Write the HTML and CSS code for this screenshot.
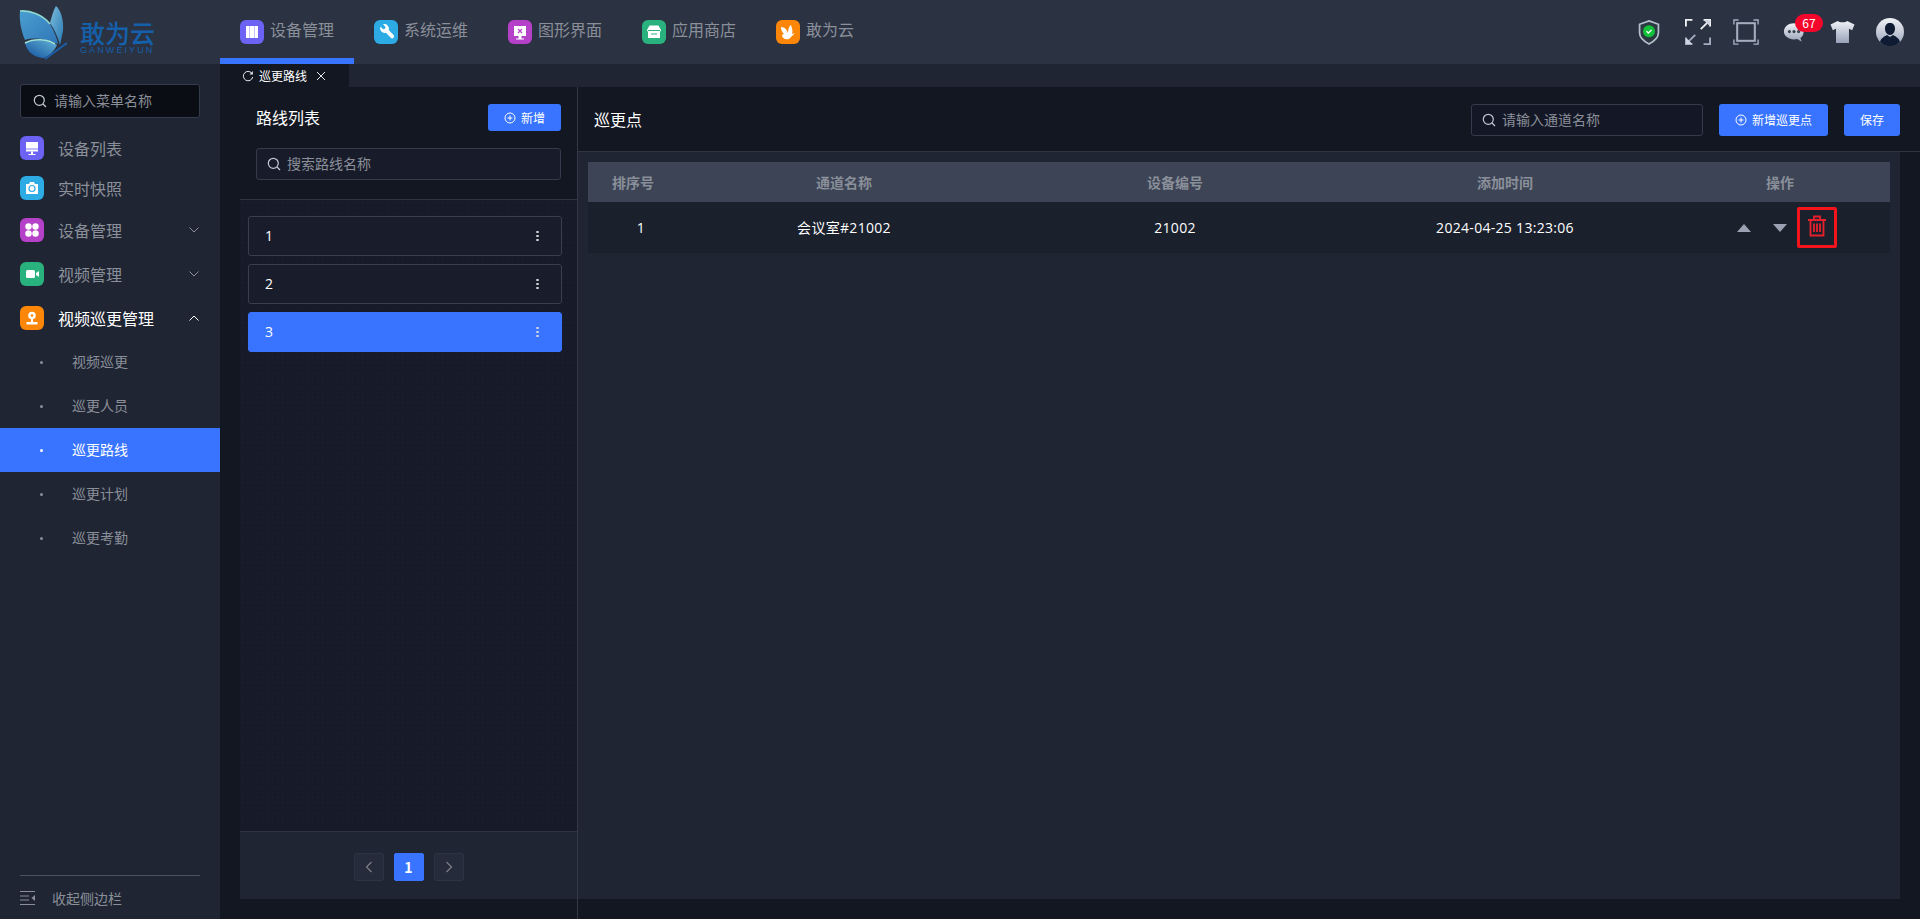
FILE: index.html
```html
<!DOCTYPE html>
<html lang="zh-CN">
<head>
<meta charset="utf-8">
<title>敢为云 - 巡更路线</title>
<link rel="stylesheet" href="styles.css">
</head>
<body>
<svg class="defs" width="0" height="0" aria-hidden="true">
  <defs>
    <linearGradient id="wa" x1="0" y1="0" x2="1" y2="1"><stop offset="0" stop-color="#4a9ed0"/><stop offset="1" stop-color="#3076b8"/></linearGradient>
    <linearGradient id="wb" x1="0" y1="0" x2="1" y2="1"><stop offset="0" stop-color="#79bcdc"/><stop offset="1" stop-color="#2c7ab4"/></linearGradient>
    <linearGradient id="wc" x1="1" y1="0" x2="0" y2="1"><stop offset="0" stop-color="#62b4d6"/><stop offset="1" stop-color="#14519f"/></linearGradient>
    <linearGradient id="sil" x1="0" y1="0" x2="0" y2="1"><stop offset="0" stop-color="#f0f2f6"/><stop offset="1" stop-color="#98a2b8"/></linearGradient>
  </defs>
</svg>
<header class="topbar">
  <div class="brand">
    <svg class="brand-mark" viewBox="18 2 50 58" width="50" height="58">
      <path d="M56 5C61 9 64 20 63 30C62 35 61 39 60 44C58 36 54 28 50 22C52 14 54 8 56 5Z" fill="url(#wb)"/>
      <path d="M20 10C30 9 43 14 50 23C54 30 57 37 58 43C47 38 34 36 25 39C21 30 19 18 20 10Z" fill="url(#wa)"/>
      <path d="M20 10C30 9 43 14 50 23" fill="none" stroke="#8fd8cf" stroke-width="1.600"/>
      <path d="M25 42C34 37 48 38 57 44C54 50 50 54 44 57C36 57 27 52 25 42Z" fill="url(#wc)"/>
      <path d="M25 42C34 37 48 38 55 43" fill="none" stroke="#9fe0d4" stroke-width="1.600"/>
      <path d="M45 58L67 42" stroke="#1b5fa8" stroke-width="2"/>
    </svg>
    <div class="brand-text">
      <span class="brand-cn">敢为云</span>
      <span class="brand-en">GANWEIYUN</span>
    </div>
  </div>
  <nav class="topnav">
    <a class="topnav-item is-active">
      <span class="app-icon c-violet"><svg viewBox="0 0 24 24"><path d="M6 6h12v12H6z" fill="#fff"/><path d="M9.500 6v12M14.500 6v12" stroke="#c9c5fb" stroke-width="1"/></svg></span>设备管理
    </a>
    <a class="topnav-item">
      <span class="app-icon c-sky"><svg viewBox="0 0 24 24"><path transform="matrix(-1 0 0 1 24 0)" d="M17.500 6.800l-2.700 2.400-1.800-.5-.5-1.800 2.500-2.600a4.600 4.600 0 0 0-5.700 5.800l-4.800 4.900a1.900 1.900 0 0 0 2.700 2.700l4.900-4.900a4.600 4.600 0 0 0 5.600-6z" fill="#fff"/></svg></span>系统运维
    </a>
    <a class="topnav-item">
      <span class="app-icon c-purple"><svg viewBox="0 0 24 24"><path d="M6 6h12v10H6z" fill="#fff"/><path d="M10.500 16h3v2.500h2.500v1H8v-1h2.500z" fill="#fff"/><path d="M10 9l4 4M14 9l-4 4" stroke="#b441c8" stroke-width="1.200"/></svg></span>图形界面
    </a>
    <a class="topnav-item">
      <span class="app-icon c-green"><svg viewBox="0 0 24 24"><path d="M7.500 5.500h9L19 10a2 2 0 0 1-1 1.800V18H6v-6.200A2 2 0 0 1 5 10z" fill="#fff"/><path d="M6 10.500h12M9 14h6" stroke="#2ab27e" stroke-width="1.200"/></svg></span>应用商店
    </a>
    <a class="topnav-item">
      <span class="app-icon c-orange"><svg viewBox="0 0 24 24"><path d="M5 7c4 0 6 3 7 6 0-3 1-7 3-8 1 3 2 6 1 9l3-1-5 5-1 1c-4 1-7-1-7-4 1-1 2-1 2-1-2-2-3-4-3-7z" fill="#fff"/></svg></span>敢为云
    </a>
  </nav>
  <div class="toolbar">
    <svg class="tool" viewBox="0 0 28 30" width="24" height="26"><path d="M14 2l11 4v10c0 6-5 10-11 13C8 26 3 22 3 16V6z" fill="#2b3a40" stroke="#b6bfce" stroke-width="2"/><circle cx="14" cy="14" r="7" fill="#12c23a"/><path d="M11 14l2.200 2.200L17 12.500" fill="none" stroke="#fff" stroke-width="1.500"/></svg>
    <svg class="tool" viewBox="0 0 28 28" width="26" height="26"><g fill="none" stroke-width="2"><path d="M1 8V1h7" stroke="#eef0f4"/><path d="M20 27h7v-7" stroke="#a5adbf"/><path d="M1 20v7h7" stroke="#a5adbf"/><path d="M20 1h7v7" stroke="#eef0f4"/><path d="M26 2l-9 9" stroke="#eef0f4"/><path d="M2 26l9-9" stroke="#a5adbf"/></g><path d="M27 1v7l-7-7zM1 27v-7l7 7z" fill="#cfd4de"/></svg>
    <svg class="tool" viewBox="0 0 28 28" width="26" height="26"><g fill="none" stroke="#a5adbf" stroke-width="1.500"><path d="M1 6V1h5M22 1h5v5M27 22v5h-5M6 27H1v-5"/></g><rect x="4.500" y="4.500" width="19" height="19" fill="none" stroke="#a5adbf" stroke-width="2.200"/></svg>
    <div class="chat">
      <svg viewBox="0 0 24 24" width="22" height="23"><path d="M12 2C6 2 1 5.800 1 11c0 5 5 8.500 11 8.500 1.500 0 2.500 0 3.500-.3l5 2.800-1.500-4c2.500-1.500 3.500-4 3.500-7C23 5.800 18 2 12 2z" fill="url(#sil)"/><circle cx="7" cy="11" r="1.700" fill="#39404f"/><circle cx="12" cy="11" r="1.700" fill="#39404f"/><circle cx="17" cy="11" r="1.700" fill="#39404f"/></svg>
      <span class="badge">67</span>
    </div>
    <svg class="tool" viewBox="0 0 28 26" width="27" height="24"><path d="M9 1c1 2 9 2 10 0l8 4-2.500 6-3.500-1.500V25H7V9.500L3.500 11 1 5z" fill="url(#sil)"/></svg>
    <svg class="tool avatar" viewBox="0 0 28 28" width="28" height="28"><circle cx="14" cy="14" r="14" fill="url(#sil)"/><path d="M14 5c3 0 5 2 5 5.500S17 17 14 17s-5-3-5-6.500S11 5 14 5zM4 24c1-4 5-6 7-7l3 2 3-2c2 1 6 3 7 7a14 14 0 0 1-20 0z" fill="#0f1b33"/></svg>
  </div>
</header>
<div class="layout">
  <aside class="sidebar">
    <label class="search search-menu">
      <svg class="search-icon" viewBox="0 0 14 14" width="14" height="14"><circle cx="6.300" cy="6.300" r="5" fill="none" stroke="currentColor" stroke-width="1.200"/><path d="M10 10l3 3" stroke="currentColor" stroke-width="1.200"/></svg>
      <span>请输入菜单名称</span>
    </label>
    <ul class="menu">
      <li class="menu-item short"><span class="app-icon c-violet"><svg viewBox="0 0 24 24"><path d="M6 6h12v9.500H6z" fill="#fff"/><path d="M6 13h12" stroke="#6c63f5" stroke-width=".8"/><path d="M11 15.500h2V18h2.500v1h-7v-1H11z" fill="#fff"/></svg></span>设备列表</li>
      <li class="menu-item short"><span class="app-icon c-sky"><svg viewBox="0 0 24 24"><path d="M6 8h3l1-2h4l1 2h3v10H6z" fill="#fff"/><circle cx="12" cy="12.500" r="3" fill="none" stroke="#2cabe5" stroke-width="1.200"/></svg></span>实时快照</li>
      <li class="menu-item"><span class="app-icon c-purple"><svg viewBox="0 0 24 24"><g fill="#fff"><circle cx="8.500" cy="8.500" r="3.200"/><circle cx="15.500" cy="8.500" r="3.200"/><circle cx="8.500" cy="15.500" r="3.200"/><circle cx="15.500" cy="15.500" r="3.200"/></g></svg></span>设备管理<svg class="caret" viewBox="0 0 10 6" width="10" height="6"><path d="M.5.500L5 5l4.500-4.500" fill="none" stroke="currentColor"/></svg></li>
      <li class="menu-item"><span class="app-icon c-green"><svg viewBox="0 0 24 24"><rect x="6" y="8" width="9" height="8" rx="1.500" fill="#fff"/><path d="M16 11l3-2v6l-3-2z" fill="#fff"/></svg></span>视频管理<svg class="caret" viewBox="0 0 10 6" width="10" height="6"><path d="M.5.500L5 5l4.500-4.500" fill="none" stroke="currentColor"/></svg></li>
      <li class="menu-item is-open"><span class="app-icon c-orange"><svg viewBox="0 0 24 24"><circle cx="12" cy="9.500" r="3.800" fill="#fff"/><circle cx="12" cy="9.500" r="1.300" fill="#fb8608"/><path d="M11 13h2v3h-2zM6.500 16h11v2.500h-11z" fill="#fff"/></svg></span>视频巡更管理<svg class="caret" viewBox="0 0 10 6" width="10" height="6"><path d="M.5 5.500L5 1l4.500 4.500" fill="none" stroke="currentColor"/></svg></li>
      <li class="sub-item">视频巡更</li>
      <li class="sub-item">巡更人员</li>
      <li class="sub-item is-active">巡更路线</li>
      <li class="sub-item">巡更计划</li>
      <li class="sub-item">巡更考勤</li>
    </ul>
    <div class="collapse">
      <svg viewBox="0 0 16 16" width="16" height="16"><path d="M0 1.500h15M0 6h9M0 10h9M0 14.500h15" stroke="currentColor" stroke-width="1"/><path d="M15 5v6l-3.500-3z" fill="currentColor"/></svg>
      <span>收起侧边栏</span>
    </div>
  </aside>
  <main class="main">
    <div class="tabbar">
      <div class="tab">
        <svg viewBox="0 0 12 12" width="12" height="12"><path d="M10.300 4A4.700 4.700 0 1 0 10.700 7" fill="none" stroke="#e6e8ec" stroke-width="1"/><path d="M10.800 1v3.400H7.500z" fill="#e6e8ec"/></svg>
        <span>巡更路线</span>
        <svg class="tab-close" viewBox="0 0 10 10" width="10" height="10"><path d="M1 1l8 8M9 1L1 9" stroke="#e6e8ec" stroke-width="1"/></svg>
      </div>
    </div>
    <div class="content">
      <section class="routes">
        <div class="routes-head">
          <div class="routes-title">
            <h2 class="title">路线列表</h2>
            <button class="btn btn-add"><svg viewBox="0 0 12 12" width="12" height="12"><circle cx="6" cy="6" r="5" fill="none" stroke="#fff"/><path d="M6 3.500v5M3.500 6h5" stroke="#fff"/></svg>新增</button>
          </div>
          <label class="search search-route">
            <svg class="search-icon" viewBox="0 0 14 14" width="14" height="14"><circle cx="6.300" cy="6.300" r="5" fill="none" stroke="currentColor" stroke-width="1.200"/><path d="M10 10l3 3" stroke="currentColor" stroke-width="1.200"/></svg>
            <span>搜索路线名称</span>
          </label>
        </div>
        <ul class="route-list">
          <li class="route"><span class="route-name">1</span><span class="more"><i></i><i></i><i></i></span></li>
          <li class="route"><span class="route-name">2</span><span class="more"><i></i><i></i><i></i></span></li>
          <li class="route is-active"><span class="route-name">3</span><span class="more"><i></i><i></i><i></i></span></li>
        </ul>
        <div class="pager">
          <span class="page"><svg viewBox="0 0 8 12" width="8" height="12"><path d="M6.500 1L1.500 6l5 5" fill="none" stroke="currentColor" stroke-width="1.200"/></svg></span>
          <span class="page is-current">1</span>
          <span class="page"><svg viewBox="0 0 8 12" width="8" height="12"><path d="M1.500 1l5 5-5 5" fill="none" stroke="currentColor" stroke-width="1.200"/></svg></span>
        </div>
      </section>
      <section class="points">
        <div class="points-head">
          <h2 class="title">巡更点</h2>
          <div class="points-actions">
            <label class="search search-channel">
              <svg class="search-icon" viewBox="0 0 14 14" width="14" height="14"><circle cx="6.300" cy="6.300" r="5" fill="none" stroke="currentColor" stroke-width="1.200"/><path d="M10 10l3 3" stroke="currentColor" stroke-width="1.200"/></svg>
              <span>请输入通道名称</span>
            </label>
            <button class="btn btn-new"><svg viewBox="0 0 12 12" width="12" height="12"><circle cx="6" cy="6" r="5" fill="none" stroke="#fff"/><path d="M6 3.500v5M3.500 6h5" stroke="#fff"/></svg>新增巡更点</button>
            <button class="btn btn-save">保存</button>
          </div>
        </div>
        <div class="points-body">
          <div class="table">
            <div class="tr th"><span>排序号</span><span>通道名称</span><span>设备编号</span><span>添加时间</span><span>操作</span></div>
            <div class="tr td">
              <span class="cell cell-order">1</span><span class="cell">会议室#21002</span><span class="cell">21002</span><span class="cell">2024-04-25 13:23:06</span>
              <span class="ops">
                <i class="arrow up"></i><i class="arrow down"></i>
                <span class="del"><svg viewBox="0 0 20 22" width="20" height="22"><path d="M1 5h18M7 5V1.500h6V5M3.500 5v15.500h13V5M7 8.500v8.500M10 8.500v8.500M13 8.500v8.500" fill="none" stroke="#e8202c" stroke-width="1.800"/></svg></span>
              </span>
            </div>
          </div>
        </div>
      </section>
    </div>
  </main>
</div>
</body>
</html>
```

FILE: styles.css
```css
* { box-sizing: border-box; }
html, body { height: 100%; }
body {
  margin: 0;
  height: 919px;
  display: flex;
  flex-direction: column;
  overflow: hidden;
  background: #131722;
  color: #fff;
  font-family: "Noto Sans CJK SC", "Liberation Sans", sans-serif;
  font-size: 14px;
}
ul { list-style: none; margin: 0; padding: 0; }
h2 { margin: 0; font-weight: 400; }
.defs { position: absolute; }

.topbar {
  height: 64px;
  flex: none;
  display: flex;
  align-items: center;
  background: #2b3242;
}
.brand {
  width: 220px;
  height: 64px;
  flex: none;
  display: flex;
  align-items: center;
  padding-left: 18px;
  gap: 12px;
}
.brand-text { display: flex; flex-direction: column; align-items: flex-start; padding-top: 9px; }
.brand-cn { font-size: 25px; line-height: 26px; color: #1560ab; font-weight: 500; }
.brand-en { font-size: 9px; line-height: 10px; color: #1560ab; letter-spacing: 2.100px; font-family: "Liberation Sans", sans-serif; }
.topnav { display: flex; height: 64px; }
.topnav-item {
  display: flex;
  align-items: center;
  gap: 6px;
  padding: 0 20px;
  height: 64px;
  font-size: 16px;
  line-height: 1;
  color: #8a8f99;
  border-bottom: 6px solid transparent;
}
.topnav-item .app-icon { margin-top: 6px; }
.topnav-item.is-active { border-bottom-color: #3874ff; }
.app-icon { width: 24px; height: 24px; border-radius: 6px; flex: none; display: block; }
.app-icon svg { display: block; width: 24px; height: 24px; }
.c-violet { background: #6c63f5; }
.c-sky { background: #2cabe5; }
.c-purple { background: #b441c8; }
.c-green { background: #2ab27e; }
.c-orange { background: #fb8608; }

.toolbar { margin-left: auto; display: flex; align-items: center; padding-right: 16px; height: 64px; }
.tool { display: block; flex: none; }
.toolbar > :nth-child(1) { margin-right: 24px; }
.toolbar > :nth-child(2) { margin-right: 22px; }
.toolbar > :nth-child(3) { margin-right: 24px; }
.toolbar > :nth-child(4) { margin-right: 24px; }
.toolbar > :nth-child(5) { margin-right: 20px; }
.chat { position: relative; width: 22px; height: 23px; }
.chat svg { display: block; }
.badge {
  position: absolute;
  left: 12px;
  top: -7px;
  width: 28px;
  height: 18px;
  border-radius: 9px;
  background: #f5072b;
  color: #fff;
  font-size: 12px;
  line-height: 18px;
  text-align: center;
}

.layout { flex: 1; display: flex; min-height: 0; }
.sidebar {
  width: 220px;
  flex: none;
  background: #1f2533;
  display: flex;
  flex-direction: column;
  padding-top: 20px;
}
.search {
  display: flex;
  align-items: center;
  border: 1px solid #333b4d;
  border-radius: 3px;
  color: #8a8f99;
  font-size: 14px;
  line-height: 1;
}
.search span { padding-bottom: 2px; }
.search-icon { flex: none; color: #c3c8d2; }
.search-menu {
  margin: 0 20px 10px;
  width: 180px;
  height: 34px;
  padding-left: 12px;
  gap: 7px;
  background: #0b0d14;
}
.menu { flex: 1; }
.menu-item {
  height: 44px;
  display: flex;
  align-items: center;
  padding: 0 21px 0 20px;
  gap: 14px;
  font-size: 16px;
  color: #8a8f99;
}
.menu-item.short { height: 40px; }
.menu-item.is-open { color: #fff; }
.caret { margin-left: auto; color: #8a8f99; }
.is-open .caret { color: #fff; }
.sub-item {
  height: 44px;
  display: flex;
  align-items: center;
  padding: 0 0 2px 72px;
  position: relative;
  font-size: 14px;
  color: #8a8f99;
}
.sub-item::before {
  content: "";
  position: absolute;
  left: 40px;
  top: 21px;
  width: 3px;
  height: 3px;
  border-radius: 50%;
  background: #8a8f99;
}
.sub-item.is-active { background: #3874ff; color: #fff; }
.sub-item.is-active::before { background: #fff; }
.collapse {
  margin: 0 20px;
  height: 44px;
  border-top: 1px solid #4b5160;
  display: flex;
  align-items: center;
  gap: 16px;
  color: #8a8f99;
  font-size: 14px;
}
.collapse svg { flex: none; display: block; }

.main { flex: 1; min-width: 0; display: flex; flex-direction: column; }
.tabbar { height: 23px; flex: none; background: #1f2533; display: flex; }
.tab {
  width: 129px;
  padding-left: 22px;
  background: #131722;
  display: flex;
  align-items: center;
  font-size: 12px;
  line-height: 1;
  color: #fff;
}
.tab span { margin-left: 5px; }
.tab-close { margin-left: 9px; }
.tab svg { display: block; flex: none; }

.content { flex: 1; min-height: 0; display: flex; padding-left: 20px; }
.title { font-size: 16px; line-height: 24px; color: #fff; }
.routes {
  width: 338px;
  flex: none;
  border-right: 1px solid #333847;
  padding-bottom: 20px;
  display: flex;
  flex-direction: column;
}
.routes-head {
  height: 113px;
  flex: none;
  padding: 17px 16px 0;
  border-bottom: 1px solid #2f3443;
  background: #131722;
}
.routes-title { display: flex; align-items: center; justify-content: space-between; height: 27px; }
.routes-title .title { margin-bottom: 2px; }
.btn {
  display: inline-flex;
  align-items: center;
  justify-content: center;
  gap: 5px;
  border: 0;
  border-radius: 3px;
  background: #3874ff;
  color: #fff;
  font: inherit;
  font-size: 12px;
  line-height: 1;
  padding: 0;
}
.btn svg { flex: none; display: block; }
.btn-add { width: 73px; height: 27px; }
.search-route {
  margin-top: 17px;
  height: 32px;
  padding-left: 10px;
  gap: 6px;
  background: #181c2a;
}
.route-list {
  flex: 1;
  padding: 16px 15px 0 8px;
  display: flex;
  flex-direction: column;
  gap: 8px;
  background: #171b29 radial-gradient(rgba(255, 255, 255, .012) 1px, transparent 1px) 0 0 / 5px 5px;
}
.route {
  height: 40px;
  flex: none;
  border: 1px solid #3a3f4d;
  border-radius: 3px;
  display: flex;
  align-items: center;
  justify-content: space-between;
  padding: 0 22px 0 16px;
  background: #191d2b;
}
.route-name { font-family: "Open Sans", sans-serif; font-size: 14px; line-height: 1; }
.route.is-active { background: #3874ff; border-color: #3874ff; }
.more { display: flex; flex-direction: column; gap: 1.500px; }
.more i { display: block; width: 3px; height: 2.500px; border-radius: 50%; background: #d4d7dd; }
.pager {
  height: 68px;
  flex: none;
  display: flex;
  justify-content: center;
  align-items: center;
  gap: 10px;
  background: #1f2533;
  border-top: 1px solid #2f3443;
  padding-top: 2px;
}
.page {
  width: 30px;
  height: 28px;
  border: 1px solid #2d3342;
  border-radius: 2px;
  background: #252b3a;
  color: #7f7f85;
  display: flex;
  align-items: center;
  justify-content: center;
  font-size: 14px;
  font-weight: 700;
}
.page.is-current { background: #3874ff; border-color: #3874ff; color: #fff; }
.page svg { display: block; }

.points { flex: 1; min-width: 0; display: flex; flex-direction: column; padding-bottom: 20px; }
.points-head {
  height: 65px;
  flex: none;
  display: flex;
  align-items: flex-start;
  justify-content: space-between;
  padding: 17px 20px 0 16px;
  border-bottom: 1px solid #2f3443;
}
.points-head .title { margin-top: 3px; }
.points-actions { display: flex; gap: 16px; }
.search-channel { width: 232px; height: 32px; padding-left: 10px; gap: 6px; background: #141826; }
.btn-new { width: 109px; height: 32px; font-size: 12px; }
.btn-save { width: 56px; height: 32px; font-size: 12px; }
.points-body {
  flex: 1;
  margin-right: 20px;
  padding: 10px;
  background: #1f2533;
}
.tr {
  display: grid;
  grid-template-columns: 90px 332px 330px 330px 220px;
  align-items: center;
  text-align: center;
}
.th { height: 40px; background: #3c4456; color: #8a8f99; font-weight: 700; font-size: 14px; line-height: 1; }
.td { height: 51px; background: #1b202d; color: #fff; font-size: 14px; line-height: 1; }
.cell { font-family: "Open Sans", "Noto Sans CJK SC", sans-serif; letter-spacing: .3px; }
.cell-order { padding-left: 16px; }
.ops { display: flex; align-items: center; padding-left: 67px; }
.arrow { display: block; width: 0; height: 0; border-left: 7px solid transparent; border-right: 7px solid transparent; }
.arrow.up { border-bottom: 8px solid #9ba2b2; }
.arrow.down { border-top: 8px solid #9ba2b2; margin-left: 22px; }
.del {
  width: 40px;
  height: 41px;
  border: 3px solid #f3141c;
  border-radius: 2px;
  margin-left: 10px;
  display: flex;
  align-items: center;
  justify-content: center;
}
.del svg { display: block; margin-top: -3px; }
```
